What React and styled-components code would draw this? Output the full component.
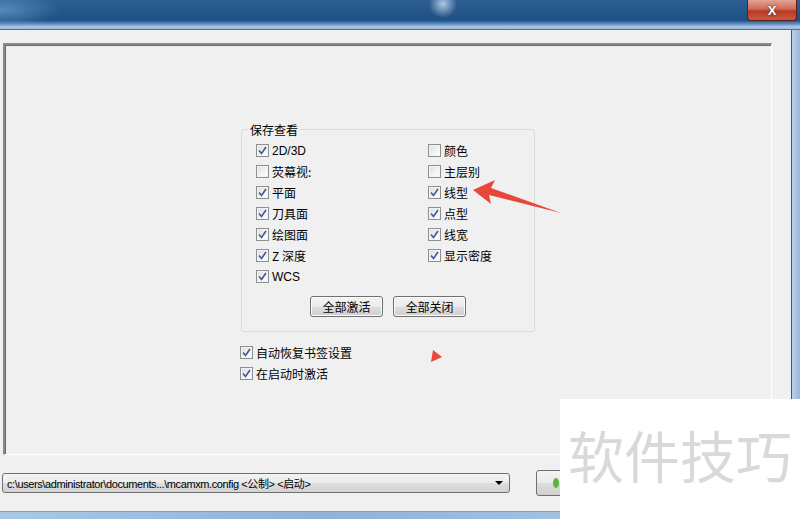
import styled, { createGlobalStyle } from "styled-components";

const GlobalStyle = createGlobalStyle`
  html, body {
    margin: 0;
    padding: 0;
    background: #f0f0f0;
  }
  body {
    font-family: "Noto Sans CJK SC", "Liberation Sans", sans-serif;
    font-size: 12px;
    color: #000;
  }
`;

const Window = styled.div`
  position: relative;
  width: 800px;
  height: 519px;
  overflow: hidden;
  display: flex;
  flex-direction: column;
  background: #a9c6e3;
`;

const TitleBar = styled.div`
  height: 29px;
  flex: none;
  display: flex;
  justify-content: flex-end;
  align-items: flex-start;
  padding-right: 3px;
  background:
    radial-gradient(ellipse 14px 14px at 443px 4px, rgba(220, 235, 250, 0.75), rgba(220, 235, 250, 0) 100%),
    radial-gradient(ellipse 60px 18px at 0px 10px, rgba(120, 170, 220, 0.6), rgba(120, 170, 220, 0) 100%),
    linear-gradient(
      to bottom,
      #2d5f94 0%,
      #245689 40%,
      #1f4f84 70%,
      #5d8bbd 82%,
      #a8c6e4 92%,
      #9fbcdb 100%
    );
  border-bottom: 1px solid #5a6d82;
`;

const CloseButton = styled.div`
  width: 48px;
  height: 20px;
  display: flex;
  align-items: center;
  justify-content: center;
  border: 1px solid #5a1e17;
  border-top: none;
  border-radius: 0 0 4px 4px;
  background: linear-gradient(to bottom, #e1a497 0%, #cf6a57 45%, #b93a27 55%, #c9583f 100%);
  color: #fff;
  font-family: "Liberation Sans", sans-serif;
  font-weight: bold;
  font-size: 13px;
  text-shadow: 0 0 2px #3b0c06;
`;

const Body = styled.div`
  flex: 1;
  display: flex;
`;

const Client = styled.div`
  width: 792px;
  flex: none;
  background: #f0f0f0;
  border-right: 1px solid #4a5663;
  display: flex;
  flex-direction: column;
  padding: 13px 0 0 3px;
  box-sizing: border-box;
`;

const Panel = styled.div`
  width: 769px;
  height: 412px;
  box-sizing: border-box;
  border-top: 2px solid #8a8a8a;
  border-left: 2px solid #8a8a8a;
  border-right: 1px solid #ffffff;
  border-bottom: 1px solid #ffffff;
  box-shadow: inset 1px 1px 0 #6a6a6a;
  padding: 76px 0 0 236px;
  display: flex;
  flex-direction: column;
  align-items: flex-start;
`;

const Group = styled.fieldset`
  margin: 0;
  width: 294px;
  box-sizing: border-box;
  border: 1px solid #d5dce3;
  border-radius: 3px;
  padding: 2px 0 14px 14px;
`;

const Legend = styled.legend`
  padding: 0 2px;
  margin-left: -8px;
  line-height: 17px;
`;

const Columns = styled.div`
  display: grid;
  grid-template-columns: 172px 1fr;
`;

const Column = styled.div`
  display: flex;
  flex-direction: column;
`;

const Item = styled.label`
  height: 21px;
  display: flex;
  align-items: center;
  gap: 3px;
  white-space: nowrap;
  font-family: ${(p) => (p.latin ? '"Liberation Sans", "Noto Sans CJK SC", sans-serif' : '"Noto Sans CJK SC", sans-serif')};
`;

const Box = styled.span`
  width: 11px;
  height: 11px;
  flex: none;
  border: 1px solid #8e8f8f;
  background: linear-gradient(135deg, #dcdcdc 0%, #f4f4f4 60%, #ffffff 100%);
  box-shadow: inset 0 0 0 1px #f4f4f4;
  display: flex;
  align-items: center;
  justify-content: center;
`;

const Buttons = styled.div`
  display: flex;
  justify-content: center;
  gap: 10px;
  margin-top: 9px;
  margin-left: -14px;
`;

const Button = styled.button`
  width: 73px;
  height: 21px;
  padding: 0;
  font-family: "Noto Sans CJK SC", sans-serif;
  font-size: 12px;
  color: #000;
  border: 1px solid #707070;
  border-radius: 3px;
  background: linear-gradient(to bottom, #f2f2f2 0%, #ebebeb 50%, #dddddd 51%, #cfcfcf 100%);
  box-shadow: inset 0 0 0 1px #fcfcfc;
`;

const Options = styled.div`
  display: flex;
  flex-direction: column;
  margin-top: 10px;
  margin-left: -1px;
`;

const Footer = styled.div`
  display: flex;
  align-items: center;
  gap: 26px;
  padding: 15px 0 0 0;
  margin-left: -1px;
`;

const Combo = styled.div`
  width: 508px;
  height: 20px;
  box-sizing: border-box;
  border: 1px solid #707070;
  border-radius: 3px;
  background: linear-gradient(to bottom, #f3f3f3 0%, #ececec 50%, #dedede 51%, #d3d3d3 100%);
  display: flex;
  align-items: center;
  justify-content: space-between;
  padding: 0 4px 0 4px;
  font-family: "Liberation Sans", "Noto Sans CJK SC", sans-serif;
  font-size: 11px;
  letter-spacing: -0.4px;
  white-space: nowrap;
`;

const DropArrow = styled.span`
  width: 0;
  height: 0;
  border-left: 4px solid transparent;
  border-right: 4px solid transparent;
  border-top: 4px solid #000;
  margin-right: 2px;
`;

const OkButton = styled.div`
  width: 80px;
  height: 26px;
  box-sizing: border-box;
  border: 1px solid #707070;
  border-radius: 3px;
  background: linear-gradient(to bottom, #f2f2f2 0%, #ebebeb 50%, #dddddd 51%, #cfcfcf 100%);
  display: flex;
  align-items: center;
  padding-left: 16px;
`;

const GreenDot = styled.span`
  width: 6px;
  height: 10px;
  border-radius: 50%;
  background: #5bb53a;
`;

const FrameRight = styled.div`
  flex: 1;
  background: linear-gradient(to right, #b9d1ea, #9db9d8);
`;

const FrameBottom = styled.div`
  height: 7px;
  flex: none;
  border-top: 1px solid #8a9aab;
  background: linear-gradient(to right, #aac8e6, #8fb2d8 40%, #b7cfe8);
`;

const Watermark = styled.div`
  position: absolute;
  left: 560px;
  top: 399px;
  right: 0;
  bottom: 0;
  background: #ffffff;
  color: #d9d9d9;
  font-family: "Noto Sans CJK SC", sans-serif;
  font-size: 56px;
  line-height: 1;
  padding: 27px 0 0 8px;
  white-space: nowrap;
`;

const Overlay = styled.svg`
  position: absolute;
  left: 0;
  top: 0;
  pointer-events: none;
`;

const Check = () => (
  <svg width="9" height="9" viewBox="0 0 9 9">
    <path d="M1 4.5 L3.5 7.5 L8 1" fill="none" stroke="#3c58a0" strokeWidth="1.6" />
  </svg>
);

const CheckItem = ({ checked = true, latin, children }) => (
  <Item latin={latin}>
    <Box>{checked && <Check />}</Box>
    {children}
  </Item>
);

const left = [
  ["2D/3D", true, true],
  ["荧幕视:", false],
  ["平面", true],
  ["刀具面", true],
  ["绘图面", true],
  ["Z 深度", true],
  ["WCS", true, true],
];

const right = [
  ["颜色", false],
  ["主层别", false],
  ["线型", true],
  ["点型", true],
  ["线宽", true],
  ["显示密度", true],
];

export default function App() {
  return (
    <Window>
      <GlobalStyle />
      <TitleBar>
        <CloseButton>X</CloseButton>
      </TitleBar>
      <Body>
        <Client>
          <Panel>
            <Group>
              <Legend>保存查看</Legend>
              <Columns>
                <Column>
                  {left.map(([t, c, l]) => (
                    <CheckItem key={t} checked={c} latin={l}>
                      {t}
                    </CheckItem>
                  ))}
                </Column>
                <Column>
                  {right.map(([t, c]) => (
                    <CheckItem key={t} checked={c}>
                      {t}
                    </CheckItem>
                  ))}
                </Column>
              </Columns>
              <Buttons>
                <Button>全部激活</Button>
                <Button>全部关闭</Button>
              </Buttons>
            </Group>
            <Options>
              <CheckItem>自动恢复书签设置</CheckItem>
              <CheckItem>在启动时激活</CheckItem>
            </Options>
          </Panel>
          <Footer>
            <Combo>
              <span>c:\users\administrator\documents...\mcamxm.config &lt;公制&gt; &lt;启动&gt;</span>
              <DropArrow />
            </Combo>
            <OkButton>
              <GreenDot />
            </OkButton>
          </Footer>
        </Client>
        <FrameRight />
      </Body>
      <FrameBottom />
      <Overlay width="800" height="519">
        <polygon points="473,190 495,180 491,188 561,213 489,195 491,204" fill="#e8473c" />
        <polygon points="433,350 442,357 431,362" fill="#e8473c" />
      </Overlay>
      <Watermark>软件技巧</Watermark>
    </Window>
  );
}
